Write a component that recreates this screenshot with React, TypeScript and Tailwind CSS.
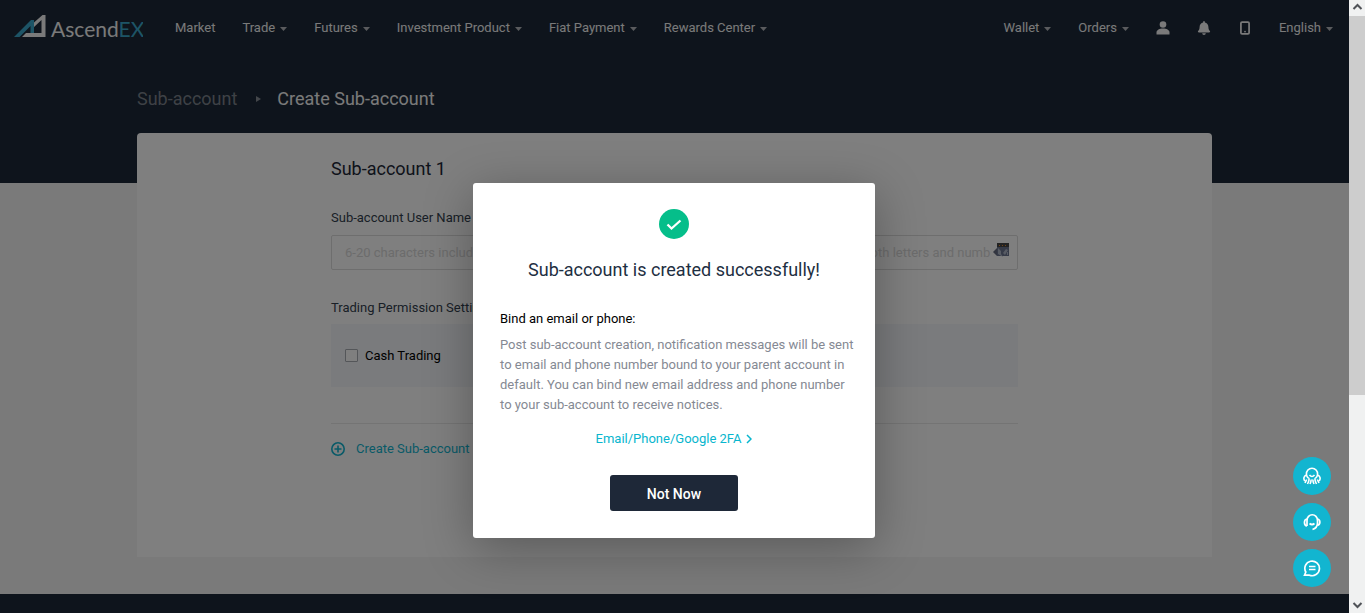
import { FaBell } from "react-icons/fa";
import { LuSmartphone } from "react-icons/lu";

const mainMenu = [
  { label: "Market", hasMenu: false },
  { label: "Trade", hasMenu: true },
  { label: "Futures", hasMenu: true },
  { label: "Investment Product", hasMenu: true },
  { label: "Fiat Payment", hasMenu: true },
  { label: "Rewards Center", hasMenu: true },
];

function Caret() {
  return (
    <svg width="7" height="4" viewBox="0 0 7 4" className="mt-[2px] fill-[#b4b7bc]" aria-hidden="true">
      <path d="M0 0h7L3.5 4z" />
    </svg>
  );
}

function MenuButton({ label, hasMenu = true }: { label: string; hasMenu?: boolean }) {
  return (
    <button type="button" className="flex items-center gap-[5px] whitespace-nowrap">
      {label}
      {hasMenu && <Caret />}
    </button>
  );
}

function Logo() {
  return (
    <a href="#" aria-label="AscendEX" className="mr-8 flex items-center">
      <svg width="129" height="26" viewBox="0 0 129 26" aria-hidden="true">
        <path d="M0 22 17 5h3v13h-3.500v-7L9 18.500 5.500 22z" fill="#3ba9cc" />
        <path d="M20 7.500 28.500 0h3v22H8l4-4h15.500V5L20 12z" fill="#f4f4f4" />
        <text x="37" y="22" fontSize="21" fontFamily="Lato, sans-serif" fill="#f4f4f4">
          Ascend
          <tspan fill="#3ba9cc">EX</tspan>
        </text>
      </svg>
    </a>
  );
}

function Navbar() {
  return (
    <nav className="flex h-14 items-center justify-between pr-4 pl-[14px] text-[13px] text-[#f4f4f4]">
      <div className="flex items-center">
        <Logo />
        <div className="flex items-center gap-[27px]">
          {mainMenu.map((item) => (
            <MenuButton key={item.label} label={item.label} hasMenu={item.hasMenu} />
          ))}
        </div>
      </div>
      <div className="flex items-center gap-[27px]">
        <MenuButton label="Wallet" />
        <MenuButton label="Orders" />
        <button type="button" aria-label="Profile">
          <svg width="14" height="14" viewBox="0 0 14 14" fill="currentColor" aria-hidden="true">
            <circle cx="7" cy="3.5" r="3.3" />
            <path d="M.5 13.500V11.500C.5 9 3.500 7.500 7 7.500s6.500 1.500 6.500 4v2z" />
          </svg>
        </button>
        <button type="button" aria-label="Notifications">
          <FaBell size={14} />
        </button>
        <button type="button" aria-label="Mobile app">
          <LuSmartphone size={14} strokeWidth={3} />
        </button>
        <MenuButton label="English" />
      </div>
    </nav>
  );
}

function SubAccountForm() {
  return (
    <main className="mx-auto -mt-[50px] h-[424px] w-full max-w-[1075px] rounded-t-sm bg-white">
      <form className="mx-auto w-full max-w-[687px] pt-6 text-[13px] text-[#333f4e]">
        <h2 className="text-lg leading-6 text-[#1c2736]">Sub-account 1</h2>
        <label htmlFor="username" className="mt-[27px] block leading-5">
          Sub-account User Name
        </label>
        <div className="mt-[7px] flex h-[35px] items-center rounded-xs border border-[#dcdcdc] pr-[7px] pl-[13px]">
          <input
            id="username"
            type="text"
            placeholder="6-20 characters including letters and numbers only. The user names must contain at least both letters and numb"
            className="min-w-0 flex-1 bg-transparent outline-none placeholder:text-[#d8d8d8]"
          />
          <PasswordHelperIcon />
        </div>
        <h3 className="mt-7 leading-5">Trading Permission Settings</h3>
        <div className="mt-[6px] flex h-[63px] items-center bg-[#f5f7fa] px-[14px]">
          <label className="flex items-center gap-[7px] text-black">
            <input
              type="checkbox"
              className="size-[13px] appearance-none rounded-[1px] border border-[#a8acb2] bg-white"
            />
            Cash Trading
          </label>
        </div>
        <div className="mt-9 border-t border-[#e9e9e9] pt-[15px]">
          <button type="button" className="flex items-center gap-[11px] leading-5 text-[#12b5d0]">
            <svg
              width="14"
              height="14"
              viewBox="0 0 14 14"
              fill="none"
              stroke="currentColor"
              strokeWidth="1.6"
              aria-hidden="true"
            >
              <circle cx="7" cy="7" r="6.2" />
              <path d="M7 3.500v7M3.500 7h7" />
            </svg>
            Create Sub-account
          </button>
        </div>
      </form>
    </main>
  );
}

function PasswordHelperIcon() {
  return (
    <svg width="17" height="15" viewBox="0 0 17 15" className="-mt-1" aria-hidden="true">
      <path d="M4 0h12v13H4z" fill="#6d7690" />
      <path d="M4 0h12v4H4z" fill="#464646" />
      <path d="M6 2h1v1H6zM9 2h1v1H9zM12 2h1v1h-1z" fill="#e08830" />
      <path d="m0 9 4-4v8z" fill="#656b80" />
      <path d="m5 5 3 3v3l2 3-5-3zM10 10l3-4 2 1-3 5zM14 9h1v3h-1z" fill="#b0b8c8" />
    </svg>
  );
}

function SuccessDialog() {
  return (
    <div
      role="dialog"
      aria-modal="true"
      aria-labelledby="dialog-title"
      className="flex w-full max-w-[402px] flex-col items-center rounded-[3px] bg-white px-[27px] pt-[26px] pb-[27px] text-[13px] shadow-[0_10px_50px_rgba(0,0,0,0.3)]"
    >
      <svg width="30" height="30" viewBox="0 0 30 30" aria-hidden="true">
        <circle cx="15" cy="15" r="15" fill="#05be8a" />
        <path d="m8.500 15.500 4 4 9-8" fill="none" stroke="#fff" strokeWidth="2.3" />
      </svg>
      <h2 id="dialog-title" className="mt-[17px] text-lg leading-7 whitespace-nowrap text-[#1e2f42]">
        Sub-account is created successfully!
      </h2>
      <p className="mt-[25px] w-full leading-5 text-black">Bind an email or phone:</p>
      <p className="-mr-2 mt-[6px] self-stretch leading-5 text-[#858993]">
        Post sub-account creation, notification messages will be sent to email and phone number bound to your
        parent account in default. You can bind new email address and phone number to your sub-account to
        receive notices.
      </p>
      <a href="#" className="mt-[14px] flex items-center gap-[5px] leading-5 text-[#08b6ce]">
        Email/Phone/Google 2FA
        <svg width="6" height="10" viewBox="0 0 6 10" fill="none" stroke="currentColor" strokeWidth="1.5">
          <path d="m1 1 4 4-4 4" />
        </svg>
      </a>
      <button
        type="button"
        className="mt-[26px] h-9 w-32 rounded-[3px] bg-[#1e2838] pt-px text-sm font-medium text-white"
      >
        Not Now
      </button>
    </div>
  );
}

const supportClass = "flex size-[38px] items-center justify-center rounded-full bg-[#12b5d0] text-white";

function SupportButtons() {
  return (
    <div className="absolute right-[18px] bottom-[26px] flex flex-col gap-2">
      <button type="button" aria-label="Community" className={supportClass}>
        <svg width="18" height="18" viewBox="0 0 18 18" fill="none" stroke="currentColor" strokeWidth="1.6">
          <path d="M5.500 11.200A5.600 5.600 0 1 1 12.500 11.200" />
          <path d="M6.500 8q2.500 3 5 0" />
          <path d="M3.500 8C.5 9 .3 12 1.800 14M5.500 11.200C7 12.500 5.500 14.500 4.500 17M8 12.500c.3 1.500-.3 3-1 4.500M14.500 8c3 1 3.200 4 1.700 6M12.500 11.200c-1.500 1.300 0 3.300 1 5.800M10 12.500c-.3 1.500.3 3 1 4.500M2 16l1.700-3.500M16 16l-1.700-3.500" />
        </svg>
      </button>
      <button type="button" aria-label="Customer service" className={supportClass}>
        <svg width="18" height="18" viewBox="0 0 18 18" fill="none" stroke="currentColor" strokeWidth="1.7">
          <path d="M4 13V7.500a5 5.500 0 0 1 10.500 0V10c0 3.500-2 5.500-5 6.500" />
          <path d="M4 6C.6 6.500.6 12.500 4 13M14.500 6c3.200.8 3.200 5.700-.3 6.500" />
          <path d="M6.500 10.500q2.500 2 5 0" />
        </svg>
      </button>
      <button type="button" aria-label="Chat" className={supportClass}>
        <svg width="18" height="18" viewBox="0 0 18 18" fill="none" stroke="currentColor" strokeWidth="1.7">
          <path d="M1.500 16.200 2.800 13A7.300 7.300 0 1 1 6.500 16.200z" />
          <path d="M6 7.500h6.500M6 10.500h6.500" />
        </svg>
      </button>
    </div>
  );
}

function ScrollTrack() {
  return (
    <div className="flex w-4 shrink-0 flex-col items-center bg-[#f0f1f1]" aria-hidden="true">
      <svg width="16" height="16" viewBox="0 0 16 16" fill="none" stroke="#505358" strokeWidth="2">
        <path d="m4.500 9 4-4 4 4" />
      </svg>
      <div className="h-[379px] w-full bg-[#cdcdcd]" />
      <svg className="mt-auto" width="16" height="16" viewBox="0 0 16 16" fill="none" stroke="#505358" strokeWidth="2">
        <path d="m4.500 6 4 4 4-4" />
      </svg>
    </div>
  );
}

export default function App() {
  return (
    <div className="flex h-screen overflow-hidden font-[Roboto,'Liberation_Sans',sans-serif]">
      <div className="relative flex min-w-0 flex-1 flex-col bg-[#f5f5f5]">
        <header className="h-[183px] shrink-0 bg-[#1c2938]">
          <Navbar />
          <div className="mx-auto flex w-full max-w-[1075px] items-center pt-[29px] text-lg">
            <a href="#" className="text-[#7d838c]">
              Sub-account
            </a>
            <svg width="5" height="6" viewBox="0 0 5 6" className="mr-4 ml-[19px] fill-[#888e96]" aria-hidden="true">
              <path d="M0 0v6l5-3z" />
            </svg>
            <h1 className="text-[#f4f4f4]">Create Sub-account</h1>
          </div>
        </header>
        <SubAccountForm />
        <footer className="mt-auto h-[19px] bg-[#1c2938]" />

        <div className="absolute inset-0 flex items-start justify-center bg-black/50 pt-[183px] pr-px">
          <SuccessDialog />
        </div>
        <SupportButtons />
      </div>
      <ScrollTrack />
    </div>
  );
}
